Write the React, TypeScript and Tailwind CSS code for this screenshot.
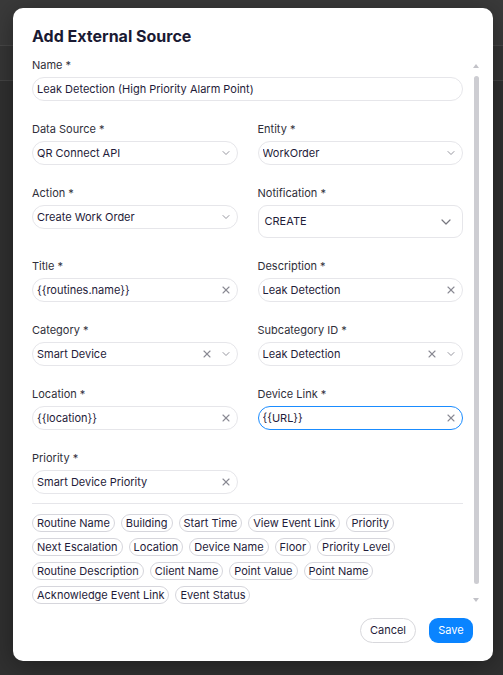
import React from 'react';
import { ChevronDown, X } from 'lucide-react';

const font = { fontFamily: 'Inter, "Noto Sans", sans-serif' };

const Label: React.FC<{ text: string }> = ({ text }) => (
  <div className="mb-[5px] h-[14px] text-[11px] leading-[14px] text-[#2f2f3a]">{text} *</div>
);

interface FieldProps {
  label: string;
  value: string;
  clear?: boolean;
  chevron?: boolean;
  focused?: boolean;
}

const Field: React.FC<FieldProps> = ({ label, value, clear, chevron, focused }) => (
  <div className="mb-[21px]">
    <Label text={label} />
    <div
      className={`flex h-[24px] items-center rounded-[12px] bg-white pl-[4px] pr-[5px] ${
        focused ? 'border-[1.5px] border-[#1a8cff]' : 'border border-[#e6e6ea]'
      }`}
    >
      <span className="flex-1 truncate text-[11px] text-[#1f1c3a]">{value}</span>
      {clear && <X className="h-[12px] w-[12px] text-[#8a8a94]" strokeWidth={2.2} />}
      {chevron && <ChevronDown className="ml-[7px] h-[12px] w-[12px] text-[#8a8a94]" strokeWidth={1.8} />}
    </div>
  </div>
);

const BigSelect: React.FC<{ label: string; value: string }> = ({ label, value }) => (
  <div className="mb-[21px]">
    <Label text={label} />
    <div className="flex h-[33px] items-center rounded-[9px] border border-[#e6e6ea] bg-white pl-[6px] pr-[8px]">
      <span className="flex-1 text-[11px] text-[#1f1c3a]">{value}</span>
      <ChevronDown className="h-[16px] w-[16px] text-[#77777f]" strokeWidth={1.8} />
    </div>
  </div>
);

const chips = [
  'Routine Name',
  'Building',
  'Start Time',
  'View Event Link',
  'Priority',
  'Next Escalation',
  'Location',
  'Device Name',
  'Floor',
  'Priority Level',
  'Routine Description',
  'Client Name',
  'Point Value',
  'Point Name',
  'Acknowledge Event Link',
  'Event Status',
];

export default function App() {
  return (
    <div
      className="h-[675px] w-[503px] overflow-hidden pt-[8px] pl-[13px] bg-[linear-gradient(to_bottom,#3a3a3a_0px,#3a3a3a_45px,#474747_45px,#474747_46px,#353535_46px,#353535_80px,#444_80px,#444_81px,#303030_81px)]"
      style={font}
    >
      <div className="flex h-[653px] w-[480px] flex-col rounded-[10px] bg-white shadow-[0_4px_24px_rgba(0,0,0,0.35)]">
        <div className="h-[44px] pl-[19px] pt-[16px]">
          <h2 className="text-[16px] font-bold leading-[24px] text-[#1a1a33]">Add External Source</h2>
        </div>

        <div className="flex min-h-0 flex-1">
          <div className="min-w-0 flex-1 overflow-hidden pl-[19px] pt-[6px]">
            <Field label="Name" value="Leak Detection (High Priority Alarm Point)" />
            <div className="grid grid-cols-2 gap-x-[20px]">
              <Field label="Data Source" value="QR Connect API" chevron />
              <Field label="Entity" value="WorkOrder" chevron />
              <Field label="Action" value="Create Work Order" chevron />
              <BigSelect label="Notification" value="CREATE" />
              <Field label="Title" value="{{routines.name}}" clear />
              <Field label="Description" value="Leak Detection" clear />
              <Field label="Category" value="Smart Device" clear chevron />
              <Field label="Subcategory ID" value="Leak Detection" clear chevron />
              <Field label="Location" value="{{location}}" clear />
              <Field label="Device Link" value="{{URL}}" clear focused />
              <div className="-mb-[12px]">
                <Field label="Priority" value="Smart Device Priority" clear />
              </div>
            </div>
            <div className="h-px bg-[#e6e6ea]" />
            <div className="mt-[10px] flex flex-wrap gap-x-[6px] gap-y-[6px]">
              {chips.map((c) => (
                <span
                  key={c}
                  className="flex h-[18px] items-center rounded-full border border-[#d6d6dc] px-[4px] text-[11px] text-[#1f1c3a]"
                >
                  {c}
                </span>
              ))}
            </div>
          </div>

          <div className="ml-[10px] mr-[14px] flex w-[6px] flex-col items-center pt-[12px] pb-[4px]">
            <div className="h-0 w-0 border-x-[3px] border-b-[4px] border-x-transparent border-b-[#c2c2c8]" />
            <div className="mt-[8px] w-[5px] flex-1 rounded-full bg-[#cdcdd2]" />
            <div className="mt-[14px] h-0 w-0 border-x-[3px] border-t-[4px] border-x-transparent border-t-[#c2c2c8]" />
          </div>
        </div>

        <div className="flex justify-end gap-[13px] pb-[18px] pr-[20px] pt-[12px]">
          <button className="h-[25px] w-[56px] rounded-full border border-[#d8d8dc] bg-white text-[11px] text-[#1f1c3a]">
            Cancel
          </button>
          <button className="h-[25px] w-[44px] rounded-[9px] bg-[#0a84ff] text-[11px] text-white">
            Save
          </button>
        </div>
      </div>
    </div>
  );
}
